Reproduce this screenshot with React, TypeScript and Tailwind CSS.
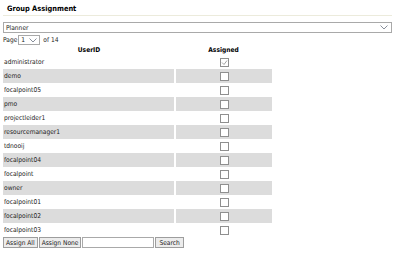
import { useState } from 'react';

const users = [
  'administrator',
  'demo',
  'focalpoint05',
  'pmo',
  'projectleider1',
  'resourcemanager1',
  'tdnooij',
  'focalpoint04',
  'focalpoint',
  'owner',
  'focalpoint01',
  'focalpoint02',
  'focalpoint03',
];

const Chevron = () => (
  <svg width="8" height="5" viewBox="0 0 8 5" className="text-gray-500">
    <path d="M0.5 0.5 L4 4 L7.5 0.5" fill="none" stroke="currentColor" strokeWidth="0.8" />
  </svg>
);

const Box = ({ checked }: { checked: boolean }) => (
  <div className="w-[9px] h-[9px] border border-[#8f8f8f] bg-white flex items-center justify-center">
    {checked && (
      <svg width="7" height="7" viewBox="0 0 7 7">
        <path d="M1 3.5 L3 5.5 L6 1.5" fill="none" stroke="#9a9a9a" strokeWidth="0.9" />
      </svg>
    )}
  </div>
);

export default function App() {
  const [assigned] = useState<Record<string, boolean>>({ administrator: true });

  return (
    <div className="w-[399px] h-[262px] bg-white text-[#222] font-['DejaVu_Sans_Condensed','DejaVu_Sans',sans-serif] text-[6.6px] leading-none">
      <div className="px-[7px] pt-[5px] pb-[3px] text-[7.4px] font-bold text-black">Group Assignment</div>
      <div className="mx-[3px] w-[389px] h-px bg-[#ecebdc]" />

      <div className="mx-[3px] mt-[6px] w-[389px] h-[11px] border border-[#a9a9a9] flex items-center justify-between pl-[2px] pr-[3px]">
        <span>Planner</span>
        <Chevron />
      </div>

      <div className="flex items-center mt-[2px] px-[3px] h-[10px]">
        <span>Page</span>
        <div className="ml-px w-[22px] h-[10px] border border-[#a9a9a9] flex items-center justify-between pl-[2px] pr-[2px]">
          <span>1</span>
          <Chevron />
        </div>
        <span className="ml-[3px]">of 14</span>
      </div>

      <div className="flex px-[3px] h-[10px] items-center font-bold text-black">
        <div className="w-[172px] text-center">UserID</div>
        <div className="w-[97px] text-center">Assigned</div>
      </div>

      <div className="px-[3px]">
        {users.map((u, i) => (
          <div key={u} className="flex h-[14px]">
            <div className={`w-[171px] flex items-center pl-px ${i % 2 === 1 ? 'bg-[#dcdcdc]' : ''}`}>{u}</div>
            <div className="w-[2px]" />
            <div className={`w-[96px] flex items-center justify-center ${i % 2 === 1 ? 'bg-[#dcdcdc]' : ''}`}>
              <Box checked={!!assigned[u]} />
            </div>
          </div>
        ))}
      </div>

      <div className="flex px-[3px] h-[11px]">
        <button className="px-[2px] border border-[#9d9d9d] bg-[#ececec] h-full">Assign All</button>
        <button className="ml-px px-[2px] border border-[#9d9d9d] bg-[#ececec] h-full">Assign None</button>
        <input className="ml-px w-[72px] h-full border border-[#a9a9a9] outline-none" />
        <button className="ml-px px-[3px] border border-[#9d9d9d] bg-[#ececec] h-full">Search</button>
      </div>
    </div>
  );
}
